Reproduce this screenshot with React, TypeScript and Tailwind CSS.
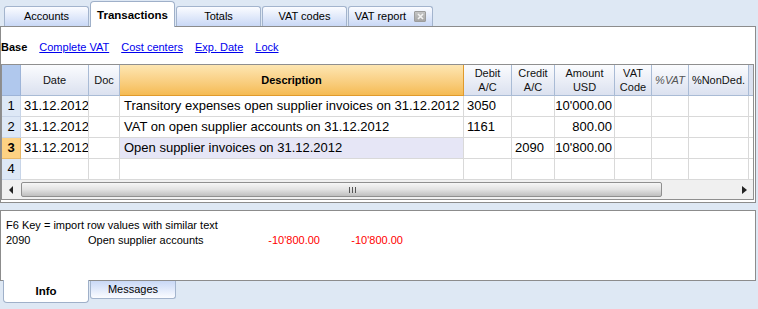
import React from 'react'

const topTabs = ['Accounts', 'Transactions', 'Totals', 'VAT codes', 'VAT report']

const rows = [
  { n: '1', date: '31.12.2012', desc: 'Transitory expenses open supplier invoices on 31.12.2012', debit: '3050', credit: '', amount: "10'000.00" },
  { n: '2', date: '31.12.2012', desc: 'VAT on open supplier accounts on 31.12.2012', debit: '1161', credit: '', amount: '800.00' },
  { n: '3', date: '31.12.2012', desc: 'Open supplier invoices on 31.12.2012', debit: '', credit: '2090', amount: "10'800.00", sel: true },
  { n: '4', date: '', desc: '', debit: '', credit: '', amount: '' },
]

function CloseBox() {
  return (
    <span className="ml-[8px] inline-flex w-[12px] h-[11px] items-center justify-center rounded-[1px] border border-[#9c9c9c] bg-gradient-to-b from-[#c4c4c4] to-[#a6a6a6]">
      <svg width="7" height="7" viewBox="0 0 7 7">
        <path d="M1 1L6 6M6 1L1 6" stroke="#f2f2f2" strokeWidth="1.6" />
      </svg>
    </span>
  )
}

export default function App() {
  const hd = 'flex flex-col items-center justify-center border-r border-b border-[#a9bbd5] bg-gradient-to-b from-[#fbfcfe] to-[#dbe1ef] text-[11px] leading-[14px] text-[#111]'
  const cell = 'flex items-center border-r border-b border-[#d9d9d9] text-[13px] whitespace-nowrap overflow-hidden'

  return (
    <div className="w-[758px] h-[309px] overflow-hidden bg-[#dee8f4] font-['Liberation_Sans',Arial,sans-serif] text-black">
      {/* Top tabs */}
      <div className="flex h-[26px] items-end gap-px pl-[4px]">
        {topTabs.map((t) =>
          t === 'Transactions' ? (
            <div
              key={t}
              className="relative z-10 -mb-px flex h-[26px] w-[85px] items-start justify-center rounded-t-[4px] border border-b-0 border-[#9fb0c9] bg-white pt-[5px] text-[11.5px] font-bold"
            >
              {t}
            </div>
          ) : (
            <div
              key={t}
              className="flex h-[20px] w-[85px] items-center justify-center rounded-t-[3px] border border-b-0 border-[#a3b4cd] bg-gradient-to-b from-[#fbfcff] to-[#c9d8f6] text-[11px]"
            >
              {t}
              {t === 'VAT report' && <CloseBox />}
            </div>
          )
        )}
      </div>

      {/* Main panel */}
      <div className="h-[177px] w-[756px] border border-[#8c8c8c] bg-white">
        <div className="flex h-[37px] items-center gap-[12px] pt-[4px] text-[11px]">
          <span className="font-bold">Base</span>
          <span className="text-[#0000ee] underline">Complete VAT</span>
          <span className="text-[#0000ee] underline">Cost centers</span>
          <span className="text-[#0000ee] underline">Exp. Date</span>
          <span className="text-[#0000ee] underline">Lock</span>
        </div>

        <div className="w-[753px] border border-[#8f8f8f]">
          <div className="grid grid-cols-[19px_68px_31px_344px_48px_43px_60px_37px_37px_60px_1fr]">
            {/* header */}
            <div className="h-[31px] border-r border-b border-[#9db4d8] bg-[#b0c8ed]" />
            <div className={hd}>Date</div>
            <div className={hd}>Doc</div>
            <div className="flex items-center justify-center border-r border-b border-[#e09a2c] bg-gradient-to-b from-[#fde6b2] to-[#f5bb52] text-[11px] font-bold">
              Description
            </div>
            <div className={hd}><span>Debit</span><span>A/C</span></div>
            <div className={hd}><span>Credit</span><span>A/C</span></div>
            <div className={hd}><span>Amount</span><span>USD</span></div>
            <div className={hd}><span>VAT</span><span>Code</span></div>
            <div className={hd + ' italic !text-[#555]'}>%VAT</div>
            <div className={hd}>%NonDed.</div>
            <div className="border-b border-[#a9bbd5] bg-[#dbe1ef]" />

            {/* rows */}
            {rows.map((r) => (
              <React.Fragment key={r.n}>
                <div
                  className={`flex h-[21px] items-center justify-center border-r border-b text-[13px] ${
                    r.sel ? 'border-[#e8b868] bg-[#fdd283] font-bold' : 'border-[#c8d5e8] bg-[#dde8f6]'
                  }`}
                >
                  {r.n}
                </div>
                <div className={cell + ' pl-[3px]'}>{r.date}</div>
                <div className={cell} />
                <div className={cell + ' pl-[4px] ' + (r.sel ? 'bg-[#e6e6f6]' : '')}>{r.desc}</div>
                <div className={cell + ' pl-[3px]'}>{r.debit}</div>
                <div className={cell + ' pl-[3px]'}>{r.credit}</div>
                <div className={cell + ' justify-end pr-[2px]'}>{r.amount}</div>
                <div className={cell} />
                <div className={cell} />
                <div className={cell} />
                <div className="border-b border-[#d9d9d9]" />
              </React.Fragment>
            ))}
          </div>

          {/* horizontal scrollbar */}
          <div className="flex h-[19px] items-center bg-[#f0f0f0]">
            <div className="flex w-[19px] justify-center">
              <svg width="5" height="8" viewBox="0 0 5 8">
                <path d="M4 0L0 4L4 8Z" fill="#222" />
              </svg>
            </div>
            <div className="flex h-[15px] w-[641px] items-center justify-center rounded-[2px] border border-[#8f8f8f] bg-gradient-to-b from-[#f6f6f6] via-[#e2e2e2] to-[#bfbfbf]">
              <div className="flex gap-[2px] pl-[22px]">
                <span className="h-[6px] w-px bg-[#555]" />
                <span className="h-[6px] w-px bg-[#555]" />
                <span className="h-[6px] w-px bg-[#555]" />
              </div>
            </div>
            <div className="flex flex-1 justify-end pr-[6px]">
              <svg width="5" height="8" viewBox="0 0 5 8">
                <path d="M0 0L5 4L0 8Z" fill="#222" />
              </svg>
            </div>
          </div>
        </div>
      </div>

      <div className="h-[7px]" />

      {/* Bottom info panel */}
      <div className="h-[71px] w-[756px] border border-[#8c8c8c] bg-white px-[5px] pt-[7px] text-[11px] leading-[15px]">
        <div>F6 Key = import row values with similar text</div>
        <div className="flex">
          <span className="w-[82px]">2090</span>
          <span className="w-[150px]">Open supplier accounts</span>
          <span className="w-[82px] text-right text-[#ff0000]">-10'800.00</span>
          <span className="w-[83px] text-right text-[#ff0000]">-10'800.00</span>
        </div>
      </div>

      {/* Bottom tabs */}
      <div className="flex items-start gap-px pl-[3px]">
        <div className="relative z-10 -mt-px flex h-[23px] w-[86px] items-center justify-center rounded-b-[4px] border border-t-0 border-[#9fb0c9] bg-white pt-[2px] text-[11.5px] font-bold">
          Info
        </div>
        <div className="flex h-[18px] w-[86px] items-center justify-center rounded-b-[3px] border border-t-0 border-[#a3b4cd] bg-gradient-to-b from-[#c9d8f6] to-[#fbfcff] text-[11px]">
          Messages
        </div>
      </div>
    </div>
  )
}
